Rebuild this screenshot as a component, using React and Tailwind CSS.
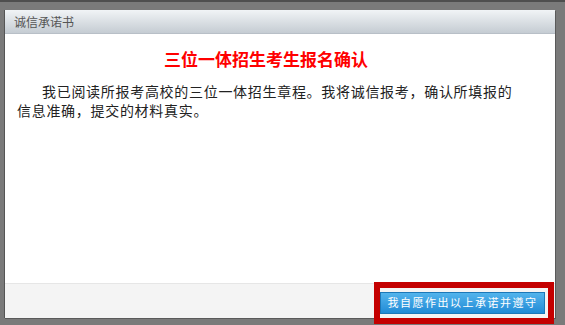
import React from 'react';

export default function App() {
  return (
    <div
      className="w-[565px] h-[325px] bg-[#7a7a7a] border-t-2 border-[#4e4e4e] pt-[8px] pl-[4px] pr-[10px] pb-[7px] flex"
      style={{ fontFamily: '"Noto Sans CJK SC", "Liberation Sans", sans-serif' }}
    >
      {/* dialog */}
      <div className="flex-1 flex flex-col bg-white border-l border-[#555] shadow-[1px_1px_0_#5a5a5a]">
        {/* header */}
        <div className="h-[24px] flex items-center pl-[9px] bg-gradient-to-b from-[#f1f4f6] to-[#c5ccd3] border-b border-[#b8bfc7]">
          <span className="text-[12px] text-[#555] leading-none">诚信承诺书</span>
        </div>

        {/* body */}
        <div className="flex-1 bg-white pl-[12px] pr-[30px]">
          <h1 className="text-center text-[17px] font-bold text-[#ff0000] mt-[15px] leading-[20px] pr-[10px]">
            三位一体招生考生报名确认
          </h1>
          <p className="mt-[13px] text-[14px] leading-[19px] tracking-[0.7px] text-[#222] indent-[25px]">
            我已阅读所报考高校的三位一体招生章程。我将诚信报考，确认所填报的信息准确，提交的材料真实。
          </p>
        </div>

        {/* footer */}
        <div className="h-[35px] bg-[#f4f4f4] border-t border-[#e6e6e6] flex justify-end items-start pt-[4px] pr-[10px]">
          <div className="relative">
            <button className="h-[22px] w-[165px] bg-gradient-to-b from-[#52b4ec] to-[#1f8bd6] border border-[#1c78b8] text-white text-[11px] tracking-[1.5px] leading-none">
              我自愿作出以上承诺并遵守
            </button>
            <div className="absolute -left-[6px] -top-[6px] -right-[9px] -bottom-[10px] border-[6px] border-[#c40000] pointer-events-none" />
          </div>
        </div>
      </div>
    </div>
  );
}
